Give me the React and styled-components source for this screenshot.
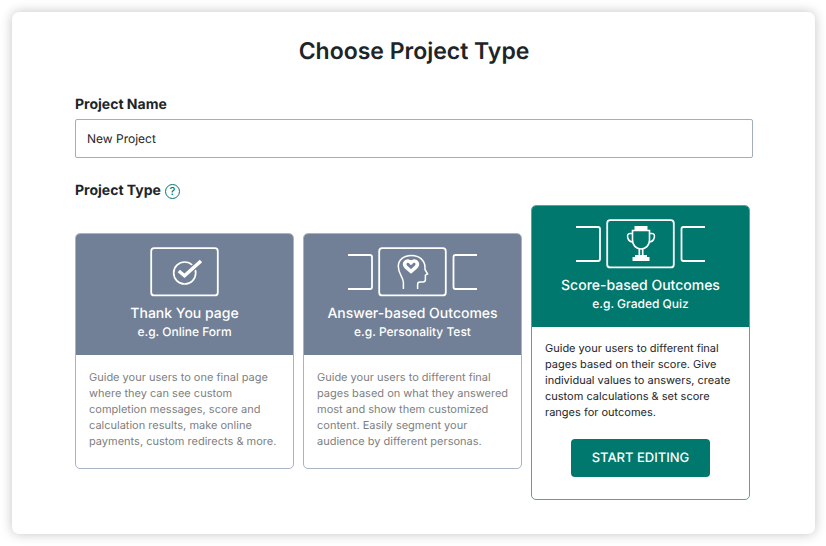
import React, { useState } from "react";
import styled, { createGlobalStyle } from "styled-components";

const slate = "#718096";
const teal = "#00786d";
const ink = "#1d2528";

const GlobalStyle = createGlobalStyle`
  *, *::before, *::after { box-sizing: border-box; }
  body {
    margin: 0;
    background: #fff;
    color: ${ink};
    font-family: Inter, "Liberation Sans", sans-serif;
    text-rendering: geometricPrecision;
  }
  button, input { font: inherit; color: inherit; text-rendering: inherit; }
`;

const Panel = styled.main`
  margin: 12px 11px 12px 12px;
  padding: 24px 62px 34px 63px;
  border-radius: 7px;
  background: #fff;
  box-shadow: 0 0 12px rgba(0, 0, 0, 0.24);
`;

const Title = styled.h1`
  margin: 0 0 29px;
  font-size: 23px;
  line-height: 30px;
  font-weight: 600;
  text-align: center;
`;

const FieldLabel = styled.label`
  display: block;
  margin-bottom: 4px;
  font-size: 14px;
  line-height: 20px;
  font-weight: 700;
`;

const TextField = styled.input`
  display: block;
  width: 100%;
  height: 39px;
  padding: 0 11px;
  border: 1px solid #a3adbd;
  border-radius: 2px;
  background: #fff;
  font-size: 12px;
`;

const TypeHeading = styled.div`
  display: flex;
  align-items: center;
  gap: 4px;
  margin-top: 23px;
`;

const TypeTitle = styled.h2`
  margin: 0;
  font-size: 14px;
  line-height: 20px;
  font-weight: 700;
`;

const HelpButton = styled.button`
  width: 15px;
  height: 15px;
  padding: 0;
  border: 1px solid ${teal};
  border-radius: 50%;
  background: none;
  color: ${teal};
  font-size: 11px;
  line-height: 13px;
  font-weight: 500;
`;

const CardRow = styled.div`
  display: grid;
  grid-template-columns: repeat(3, 1fr);
  align-items: start;
  gap: 9px;
  margin-top: 4px;
  padding-right: 3px;
`;

const Card = styled.article`
  margin-top: ${({ $active }) => ($active ? "0" : "28px")};
  border: 1px solid ${({ $active }) => ($active ? "#55a59c" : "#a9b3c3")};
  border-radius: 5px;
  overflow: hidden;
  background: #fff;
`;

const CardHeader = styled.button`
  display: flex;
  flex-direction: column;
  align-items: center;
  width: 100%;
  padding: 13px 8px 14px;
  border: 0;
  background: ${({ $active }) => ($active ? teal : slate)};
  color: #fff;
`;

const Artwork = styled.svg`
  display: block;
  width: 129px;
  height: 50px;
  fill: none;
  stroke: #fff;
  stroke-width: 1.8;
`;

const CardTitle = styled.span`
  margin-top: 8px;
  font-size: 14px;
  line-height: 18px;
  font-weight: 500;
`;

const CardExample = styled.span`
  font-size: 12px;
  line-height: 18px;
  font-weight: 500;
`;

const CardBody = styled.div`
  padding: ${({ $active }) => ($active ? "13px 8px 22px 13px" : "14px 8px 19px 13px")};
  color: ${({ $active }) => ($active ? ink : "#7d8082")};
`;

const Description = styled.p`
  margin: 0;
  font-size: 11px;
  line-height: 16px;
`;

const StartButton = styled.button`
  display: block;
  height: 38px;
  margin: 19px auto 0;
  padding: 0 21px;
  border: 0;
  border-radius: 4px;
  background: ${teal};
  color: #fff;
  font-size: 13px;
  font-weight: 500;
`;

const StartRow = styled.div`
  padding-right: 5px;
`;

const Frame = () => <rect x="31.2" y="1.2" width="66.6" height="47.2" rx="3" />;

const Brackets = () => (
  <>
    <path d="M0 8H22Q24 8 24 10V40Q24 42 22 42H0" />
    <path d="M129 8H107.500Q105.500 8 105.500 10V40Q105.500 42 107.500 42H129" />
  </>
);

const CheckArt = () => (
  <Artwork viewBox="0 0 129 50" aria-hidden="true">
    <Frame />
    <circle cx="64.700" cy="26" r="11" strokeWidth="1.700" />
    <path d="M59 24L64.500 28.500L81 14" stroke={slate} strokeWidth="6" />
    <path d="M58.800 24L64.500 28.800L81 14" strokeWidth="3.500" />
  </Artwork>
);

const HeadArt = () => (
  <Artwork viewBox="0 0 129 50" aria-hidden="true">
    <Brackets />
    <Frame />
    <path
      d="M55.400 42V35.500C55.400 30 50.300 27 50.300 19.500C50.300 12.500 56 8.500 63.500 8.500C71.500 8.500 77 13.500 77 20.500V22.500L79.600 27L77.400 28.200V32.500Q77.400 35 75 35H72Q69.600 35 69.600 37.500V42"
      strokeWidth="1.500"
    />
    <path
      d="M63 24.500L57.800 19.800C55.200 17 57.400 13.800 60 14Q62 14.200 63 16Q64 14.200 66 14C68.600 13.800 70.800 17 68.200 19.800Z"
      strokeWidth="3.600"
      strokeLinejoin="round"
    />
  </Artwork>
);

const TrophyArt = () => (
  <Artwork viewBox="0 0 129 50" aria-hidden="true">
    <Brackets />
    <Frame />
    <path
      d="M56.500 11.500H73.500V21C73.500 26 70 30 65 30S56.500 26 56.500 21Z"
      strokeWidth="1.600"
    />
    <path
      d="M56.500 14.500H54C51.500 14.500 51.300 16.500 51.700 18.500C52.200 21 54 22.800 57 23M73.500 14.500H76C78.500 14.500 78.700 16.500 78.300 18.500C77.800 21 76 22.800 73 23"
      strokeWidth="1.500"
    />
    <path d="M63.300 30V37M66.700 30V37" strokeWidth="1.700" />
    <path d="M58.500 7H71.500V12H58.500ZM59 36H71V38H73.500V42H56.500V38H59Z" fill="#fff" stroke="none" />
  </Artwork>
);

const projectTypes = [
  {
    id: "thanks",
    art: <CheckArt />,
    title: "Thank You page",
    example: "e.g. Online Form",
    description:
      "Guide your users to one final page where they can see custom completion messages, score and calculation results, make online payments, custom redirects & more.",
  },
  {
    id: "answer",
    art: <HeadArt />,
    title: "Answer-based Outcomes",
    example: "e.g. Personality Test",
    description:
      "Guide your users to different final pages based on what they answered most and show them customized content. Easily segment your audience by different personas.",
  },
  {
    id: "score",
    art: <TrophyArt />,
    title: "Score-based Outcomes",
    example: "e.g. Graded Quiz",
    description:
      "Guide your users to different final pages based on their score. Give individual values to answers, create custom calculations & set score ranges for outcomes.",
  },
];

export default function App() {
  const [name, setName] = useState("New Project");
  const active = "score";

  return (
    <>
      <GlobalStyle />
      <Panel>
        <Title>Choose Project Type</Title>
        <FieldLabel htmlFor="project-name">Project Name</FieldLabel>
        <TextField
          id="project-name"
          type="text"
          value={name}
          onChange={(event) => setName(event.target.value)}
        />
        <TypeHeading>
          <TypeTitle>Project Type</TypeTitle>
          <HelpButton type="button" aria-label="About project types">?</HelpButton>
        </TypeHeading>
        <CardRow>
          {projectTypes.map((type) => {
            const isActive = type.id === active;
            return (
              <Card key={type.id} $active={isActive}>
                <CardHeader type="button" aria-pressed={isActive} $active={isActive}>
                  {type.art}
                  <CardTitle>{type.title}</CardTitle>
                  <CardExample>{type.example}</CardExample>
                </CardHeader>
                <CardBody $active={isActive}>
                  <Description>{type.description}</Description>
                  {isActive && (
                    <StartRow>
                      <StartButton type="button">START EDITING</StartButton>
                    </StartRow>
                  )}
                </CardBody>
              </Card>
            );
          })}
        </CardRow>
      </Panel>
    </>
  );
}
